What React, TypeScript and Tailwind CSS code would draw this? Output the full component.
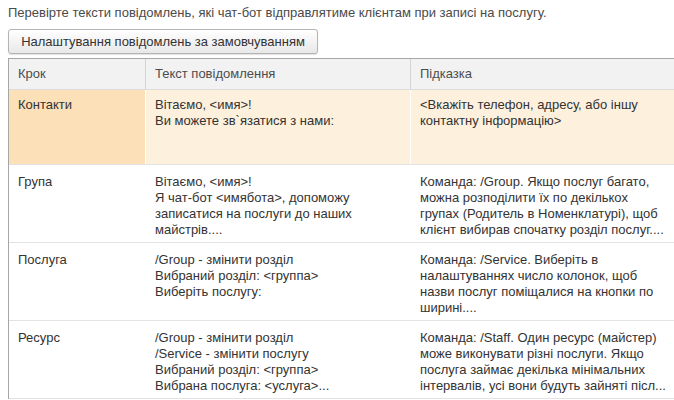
const rows = [
  {
    step: "Контакти",
    text: ["Вітаємо, <имя>!", "Ви можете зв`язатися з нами:"],
    hint: ["<Вкажіть телефон, адресу, або іншу", "контактну інформацію>"],
    active: true,
  },
  {
    step: "Група",
    text: ["Вітаємо, <имя>!", "Я чат-бот <имябота>, допоможу", "записатися на послуги до наших", "майстрів...."],
    hint: [
      "Команда: /Group. Якщо послуг багато,",
      "можна розподілити їх по декількох",
      "групах (Родитель в Номенклатурі), щоб",
      "клієнт вибирав спочатку розділ послуг....",
    ],
  },
  {
    step: "Послуга",
    text: ["/Group - змінити розділ", "Вибраний розділ: <группа>", "Виберіть послугу:"],
    hint: [
      "Команда: /Service. Виберіть в",
      "налаштуваннях число колонок, щоб",
      "назви послуг поміщалися на кнопки по",
      "ширині....",
    ],
  },
  {
    step: "Ресурс",
    text: ["/Group - змінити розділ", "/Service - змінити послугу", "Вибраний розділ: <группа>", "Вибрана послуга: <услуга>..."],
    hint: [
      "Команда: /Staff. Один ресурс (майстер)",
      "може виконувати різні послуги. Якщо",
      "послуга займає декілька мінімальних",
      "інтервалів, усі вони будуть зайняті післ...",
    ],
  },
]

function Lines({ items }: { items: string[] }) {
  return (
    <>
      {items.map((l, i) => (
        <div key={i} className="whitespace-nowrap">
          {l}
        </div>
      ))}
    </>
  )
}

export default function App() {
  return (
    <div className="w-[674px] h-[400px] overflow-hidden bg-white font-['Arial','Liberation_Sans',sans-serif] text-[13px] leading-4 text-[#333]">
      <p className="pl-2 pt-[5px] text-[#4a4a4a]">
        Перевірте тексти повідомлень, які чат-бот відправлятиме клієнтам при записі на послугу.
      </p>
      <button
        type="button"
        className="ml-2 mt-2 h-[25px] w-[310px] rounded-[3px] border border-[#b4b4b4] bg-gradient-to-b from-white to-[#e8e8e8] text-[#333] shadow-[0_1px_1px_rgba(0,0,0,0.12)]"
      >
        Налаштування повідомлень за замовчуванням
      </button>

      <div className="ml-2 mt-[4px] border-l border-t border-[#a6a6a6]">
        <div className="grid h-[31px] grid-cols-[137px_265px_1fr] border-b border-[#dcdcdc] bg-[#f2f2f2] text-[#4d4d4d]">
          <div className="flex items-center border-r border-[#d4d4d4] pl-[9px]">Крок</div>
          <div className="flex items-center border-r border-[#d4d4d4] pl-[9px]">Текст повідомлення</div>
          <div className="flex items-center pl-[9px]">Підказка</div>
        </div>
        {rows.map((r) => (
          <div
            key={r.step}
            className={`grid grid-cols-[137px_265px_1fr] border-b border-[#e3e3e3] ${r.active ? "h-[75px] bg-[#fdf0dd]" : "h-[78px] bg-white"}`}
          >
            <div className={`pl-[9px] ${r.active ? "border-r border-white bg-[#fbe0b8] pt-[7px]" : "pt-[9px]"}`}>{r.step}</div>
            <div className={`pl-[9px] ${r.active ? "border-r border-white pt-[7px]" : "pt-[9px]"}`}>
              <Lines items={r.text} />
            </div>
            <div className={`pl-[9px] ${r.active ? "pt-[7px]" : "pt-[9px]"}`}>
              <Lines items={r.hint} />
            </div>
          </div>
        ))}
      </div>
    </div>
  )
}
